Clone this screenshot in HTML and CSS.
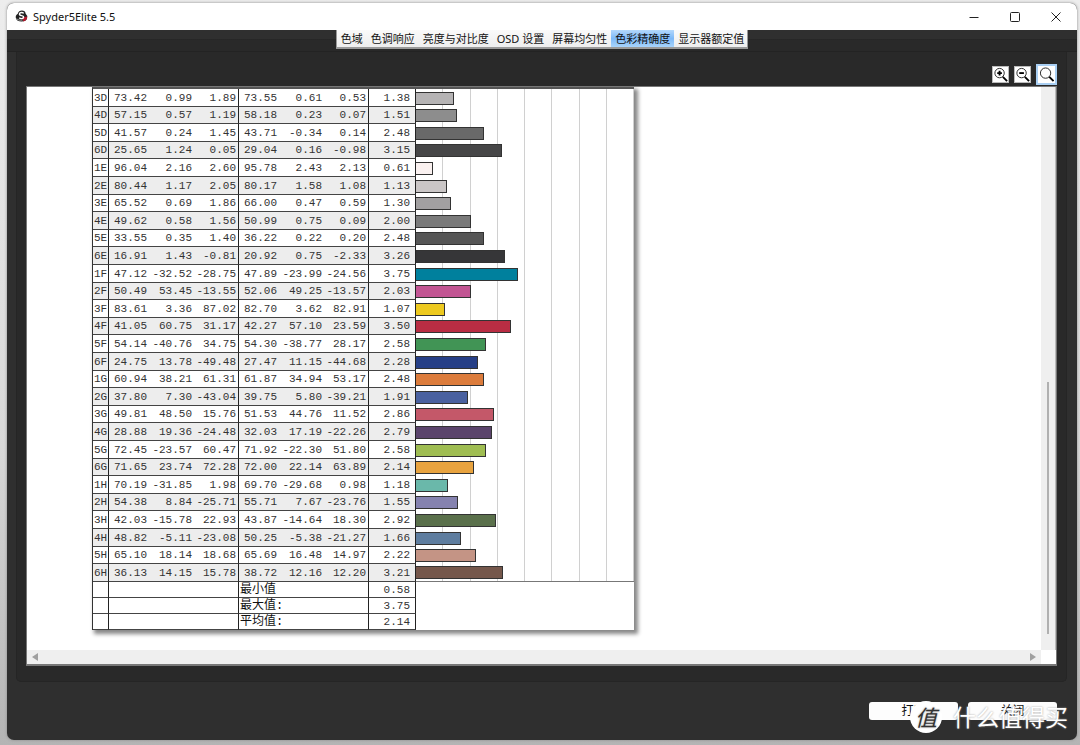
FILE: index.html
```html
<!DOCTYPE html>
<html lang="zh-CN">
<head>
<meta charset="utf-8">
<title>Spyder5Elite 5.5</title>
<link rel="stylesheet" href="styles.css">
</head>
<body>
<div class="window">
  <header class="titlebar">
    <svg class="app-icon" viewBox="0 0 14 14" aria-hidden="true">
      <path d="M1 9 Q0 6 3 4 Q4 0.500 7.500 0.500 Q11 0.500 11.500 4 Q14 6 13 9 Q12 12.500 7 12.500 Q2 12.500 1 9Z" fill="#222"/>
      <path d="M8 8 L13 7 Q13.500 11 9 12.500Z" fill="#b5182c"/>
      <path d="M9.500 3.500 Q7 2 5 3.500 Q4 5.500 7 6 Q10 6.500 9 8.500 Q7 10 4.500 8.500" fill="none" stroke="#fff" stroke-width="1.500"/>
      <path d="M1.500 9.500 Q4 11.500 8 11" fill="none" stroke="#bbb" stroke-width="0.800"/>
    </svg>
    <h1 class="title">Spyder5Elite 5.5</h1>
    <div class="window-controls">
      <button type="button" class="win-btn" aria-label="最小化"><svg viewBox="0 0 10 10"><path d="M0.500 5.500H9.500"/></svg></button>
      <button type="button" class="win-btn" aria-label="最大化"><svg viewBox="0 0 10 10"><rect x="0.500" y="0.500" width="9" height="9" rx="1"/></svg></button>
      <button type="button" class="win-btn" aria-label="关闭窗口"><svg viewBox="0 0 10 10"><path d="M0.500 0.500L9.500 9.500M9.500 0.500L0.500 9.500"/></svg></button>
    </div>
  </header>
  <div class="toolbar">
    <nav class="tabs">
      <button type="button" class="tab">色域</button>
      <button type="button" class="tab">色调响应</button>
      <button type="button" class="tab">亮度与对比度</button>
      <button type="button" class="tab">OSD 设置</button>
      <button type="button" class="tab">屏幕均匀性</button>
      <button type="button" class="tab active">色彩精确度</button>
      <button type="button" class="tab">显示器额定值</button>
    </nav>
  </div>
  <main class="panel">
    <div class="zoom-tools">
      <button type="button" class="zoom-btn" aria-label="放大"><svg viewBox="0 0 16 16"><circle cx="7" cy="6.500" r="5"/><path d="M4.500 6.500H9.500M7 4V9" class="thick"/><path d="M10.500 10.500L15 15" class="thick"/></svg></button>
      <button type="button" class="zoom-btn" aria-label="缩小"><svg viewBox="0 0 16 16"><circle cx="7" cy="6.500" r="5"/><path d="M4.500 6.500H9.500" class="thick"/><path d="M10.500 10.500L15 15" class="thick"/></svg></button>
      <button type="button" class="zoom-btn selected" aria-label="适合页面"><svg viewBox="0 0 16 16"><circle cx="7" cy="6.500" r="5.500"/><path d="M11 10.500L15.500 15" class="thick"/></svg></button>
    </div>
    <div class="viewport">
      <div class="canvas">
        <table class="report">
          <colgroup>
            <col class="c-id"><col class="c-l"><col class="c-a"><col class="c-b"><col class="c-l"><col class="c-a"><col class="c-b"><col class="c-diff"><col class="c-chart">
          </colgroup>
          <tbody id="rows"></tbody>
          <tbody class="summary">
            <tr><td></td><td class="group" colspan="3"></td><th class="group" scope="row" colspan="3">最小值</th><td class="diff">0.58</td><td class="blank"></td></tr>
            <tr><td></td><td class="group" colspan="3"></td><th class="group" scope="row" colspan="3">最大值:</th><td class="diff">3.75</td><td class="blank"></td></tr>
            <tr><td></td><td class="group" colspan="3"></td><th class="group" scope="row" colspan="3">平均值:</th><td class="diff">2.14</td><td class="blank"></td></tr>
          </tbody>
        </table>
      </div>
      <div class="vscroll"><span class="thumb"></span></div>
      <div class="hscroll"><span class="arrow left"></span><span class="arrow right"></span></div>
    </div>
  </main>
  <footer class="actions">
    <button type="button" class="action">打印</button>
    <button type="button" class="action">关闭</button>
    <div class="watermark"><span class="badge">值</span><span>什么值得买</span></div>
  </footer>
</div>
<script src="rows.js"></script>
</body>
</html>
```
FILE: styles.css
```css
* { box-sizing: border-box; }
body {
  margin: 0;
  height: 100vh;
  padding: 3px 3px 5px 7px;
  background: linear-gradient(#ededed, #d8d8d8 60%, #b4b4b4);
  font-family: "Noto Sans", "Noto Sans CJK SC", sans-serif;
  color: #111;
}
button { font: inherit; color: inherit; border: 0; padding: 0; background: none; }
.window {
  height: 100%;
  display: flex;
  flex-direction: column;
  background: #2f2f2f;
  border-radius: 7px;
  box-shadow: 0 0 3px #888;
}
.titlebar {
  height: 27px;
  flex: none;
  display: flex;
  align-items: center;
  background: #fff;
  border-radius: 7px 7px 0 0;
  padding: 0 16px 0 8px;
}
.app-icon { width: 13px; height: 13px; }
.title { margin: 0 0 0 5px; font-size: 11px; font-weight: 400; flex: 1; }
.window-controls { display: flex; gap: 31px; }
.win-btn { width: 10px; height: 10px; display: flex; }
.win-btn svg { width: 10px; height: 10px; fill: none; stroke: #222; }
.toolbar {
  height: 22px;
  flex: none;
  display: flex;
  justify-content: center;
  align-items: flex-start;
  background: linear-gradient(#2f2f2f 9px, #242424 9px, #292929 10px);
  border-bottom: 1px solid #232323;
}
.tabs { display: flex; border: 1px solid #999; border-top: 0; border-bottom: 2px solid #999; }
.tab {
  height: 17px;
  padding: 0 4px;
  line-height: 17px;
  font-size: 11px;
  background: linear-gradient(#fafafa, #eee);
  border-right: 1px solid #ddd;
  margin-right: -1px;
  white-space: nowrap;
}
.tab:last-child { margin-right: 0; border-right: 0; padding-right: 3px; }
.tab.active { background: linear-gradient(#b4d8fc, #7db9f8 50%, #a8d4fc); }
.panel {
  flex: 1;
  min-height: 0;
  display: flex;
  flex-direction: column;
  margin: 0 10px 0 9px;
  padding: 11px 9px 15px 9px;
  background: #292929;
  border: 1px solid #252525;
  border-top: 0;
  border-radius: 0 0 5px 5px;
}
.zoom-tools { height: 23px; flex: none; display: flex; justify-content: flex-end; align-items: center; gap: 5px; }
.zoom-btn { width: 17px; height: 17px; display: flex; background: #fff; border: 1px solid #bbb; }
.zoom-btn svg { width: 15px; height: 15px; fill: none; stroke: #222; stroke-width: 1; }
.zoom-btn .thick { stroke-width: 2; stroke: #000; }
.zoom-btn.selected { width: 21px; height: 21px; padding: 1px; border: 2px solid #a9cff3; }
.viewport {
  flex: 1;
  min-height: 0;
  display: grid;
  grid-template-columns: 1fr 15px;
  grid-template-rows: 1fr 14px;
  background: #fff;
  border: 1px solid #777;
  border-bottom-width: 2px;
}
.canvas { overflow: hidden; padding-left: 65px; }
.report {
  width: 542px;
  table-layout: fixed;
  border-spacing: 0;
  border-top: 2px solid #555;
  border-left: 1px solid #333;
  background: #fff;
  box-shadow: 3px 3px 4px 1px #888;
  font-family: "Liberation Mono", "Noto Sans CJK SC", monospace;
  font-size: 11px;
  line-height: 14px;
  color: #333;
}
.c-id { width: 15px; }
.c-l { width: 41px; }
.c-a { width: 45px; }
.c-b { width: 44px; }
.c-diff { width: 48px; }
.report td, .report th {
  height: 18px;
  padding: 0 2px 0 0;
  border-bottom: 1px solid #444;
  text-align: right;
  font-weight: 400;
  white-space: nowrap;
}
.report tr:nth-child(5n+2) > *, .report tr:nth-child(5n+4) > * { height: 17px; }
.report tr:nth-child(even) > * { background-color: #ededed; }
.report .group { border-left: 1px solid #222; }
.report .diff { border-left: 1px solid #222; border-right: 1px solid #222; padding-right: 5px; }
.report th.id { padding: 0; text-align: center; }
.report tr > .chart {
  padding: 0;
  border: 0;
  background: repeating-linear-gradient(to right, transparent 0 calc(12.5% - 1px), #d0d0d0 calc(12.5% - 1px) 12.5%);
}
.report tr:last-child > .chart { border-bottom: 1px solid #777; }
.bar { display: block; height: 13px; border: 1px solid #333; border-left: 0; }
.report .summary tr > * { height: 16px; background: #fff; }
.report .summary th { text-align: left; padding-left: 1px; font-size: 12px; color: #111; }
.report .summary .blank { border: 0; }
.vscroll {
  background: #efefef;
  display: flex;
  justify-content: center;
  align-items: flex-end;
  padding-bottom: 16px;
  border-right: 1px solid #bbb;
}
.thumb { width: 2px; height: 46%; background: #b0b0b0; }
.hscroll { background: #efefef; display: flex; justify-content: space-between; align-items: center; padding: 0 5px; }
.arrow { border: 4px solid transparent; }
.arrow.left { border-right: 6px solid #a0a0a0; border-left: 0; }
.arrow.right { border-left: 6px solid #a0a0a0; border-right: 0; }
.actions {
  position: relative;
  height: 58px;
  flex: none;
  display: flex;
  justify-content: flex-end;
  align-items: center;
  gap: 10px;
  padding: 0 20px 0 0;
}
.action { width: 89px; height: 18px; line-height: 18px; font-size: 12px; background: #fdfdfd; border-radius: 3px; }
.watermark {
  position: absolute;
  right: 9px;
  bottom: 6px;
  display: flex;
  align-items: center;
  gap: 11px;
  height: 34px;
  font-size: 23px;
  line-height: 34px;
  color: #fff;
  text-shadow: 0 0 2px #999;
  white-space: nowrap;
}
.badge {
  width: 32px;
  height: 32px;
  line-height: 32px;
  text-align: center;
  border-radius: 50%;
  background: #fff;
  color: #333;
  font-style: italic;
  font-size: 22px;
}
```
FILE: rows.js
```js
// id, target L a b, measured L a b, difference, patch colour
const samples = `3D 73.42 0.99 1.89 73.55 0.61 0.53 1.38 #b5b3b4
4D 57.15 0.57 1.19 58.18 0.23 0.07 1.51 #8d8d8d
5D 41.57 0.24 1.45 43.71 -0.34 0.14 2.48 #696969
6D 25.65 1.24 0.05 29.04 0.16 -0.98 3.15 #464647
1E 96.04 2.16 2.60 95.78 2.43 2.13 0.61 #faf1f0
2E 80.44 1.17 2.05 80.17 1.58 1.08 1.13 #cac6c6
3E 65.52 0.69 1.86 66.00 0.47 0.59 1.30 #a2a0a1
4E 49.62 0.58 1.56 50.99 0.75 0.09 2.00 #7a7a7a
5E 33.55 0.35 1.40 36.22 0.22 0.20 2.48 #565656
6E 16.91 1.43 -0.81 20.92 0.75 -2.33 3.26 #363638
1F 47.12 -32.52 -28.75 47.89 -23.99 -24.56 3.75 #00809d
2F 50.49 53.45 -13.55 52.06 49.25 -13.57 2.03 #c25593
3F 83.61 3.36 87.02 82.70 3.62 82.91 1.07 #edc91f
4F 41.05 60.75 31.17 42.27 57.10 23.59 3.50 #b92d43
5F 54.14 -40.76 34.75 54.30 -38.77 28.17 2.58 #419455
6F 24.75 13.78 -49.48 27.47 11.15 -44.68 2.28 #263f87
1G 60.94 38.21 61.31 61.87 34.94 53.17 2.48 #dc7c3c
2G 37.80 7.30 -43.04 39.75 5.80 -39.21 1.91 #4a61a0
3G 49.81 48.50 15.76 51.53 44.76 11.52 2.86 #c45869
4G 28.88 19.36 -24.48 32.03 17.19 -22.26 2.79 #5b446c
5G 72.45 -23.57 60.47 71.92 -22.30 51.80 2.58 #9fbd52
6G 71.65 23.74 72.28 72.00 22.14 63.89 2.14 #e8a33f
1H 70.19 -31.85 1.98 69.70 -29.68 0.98 1.18 #6ab8aa
2H 54.38 8.84 -25.71 55.71 7.67 -23.76 1.55 #8582af
3H 42.03 -15.78 22.93 43.87 -14.64 18.30 2.92 #5a704b
4H 48.82 -5.11 -23.08 50.25 -5.38 -21.27 1.66 #5e7d9f
5H 65.10 18.14 18.68 65.69 16.48 14.97 2.22 #c49485
6H 36.13 14.15 15.78 38.72 12.16 12.20 3.21 #75574b`;

const scaleMax = 8;

document.getElementById("rows").innerHTML = samples.split("\n").map((line) => {
  const [id, l1, a1, b1, l2, a2, b2, diff, colour] = line.split(" ");
  const width = (diff / scaleMax) * 100;
  return `<tr><th class="id" scope="row">${id}</th>
    <td class="group">${l1}</td><td>${a1}</td><td>${b1}</td>
    <td class="group">${l2}</td><td>${a2}</td><td>${b2}</td>
    <td class="diff">${diff}</td>
    <td class="chart"><span class="bar" style="width:${width}%;background:${colour}"></span></td></tr>`;
}).join("");
```
